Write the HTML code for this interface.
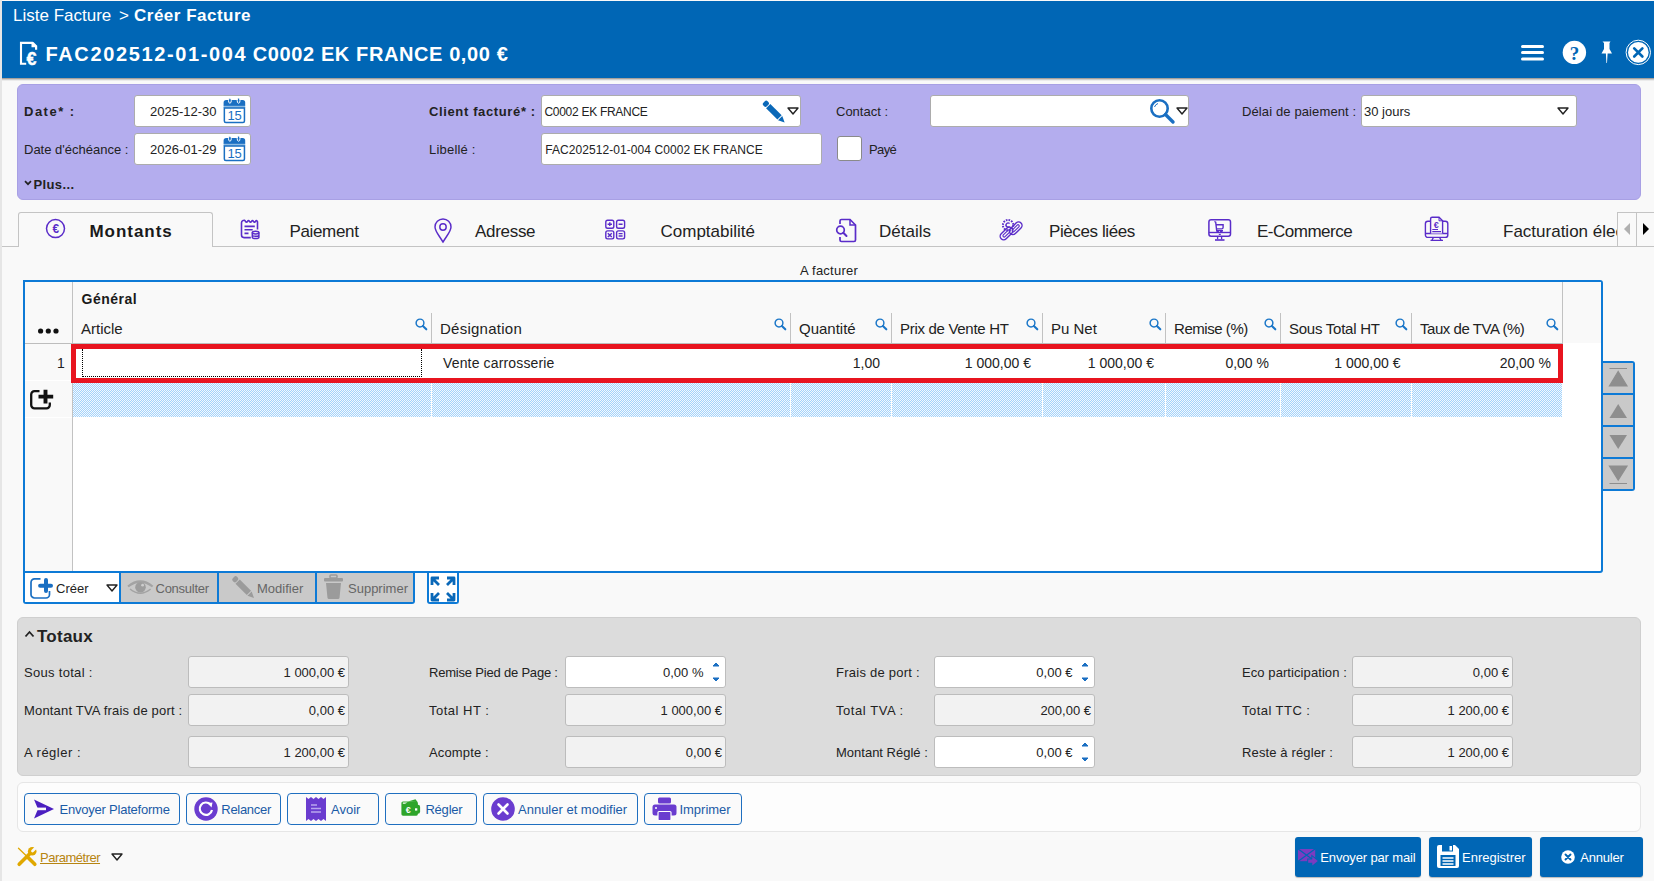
<!DOCTYPE html>
<html><head><meta charset="utf-8">
<style>
*{box-sizing:border-box;margin:0;padding:0}
html,body{width:1654px;height:881px;overflow:hidden;background:#f9f9f9;font-family:"Liberation Sans",sans-serif;color:#222;position:relative}
.a{position:absolute}
.t{position:absolute;white-space:nowrap;line-height:1}
.s13{font-size:13px}
.b{font-weight:bold}
.inp{position:absolute;background:#fff;border:1px solid #acacac;border-radius:3px}
.ro{position:absolute;background:#f2f2f2;border:1px solid #bcbcbc;border-radius:3px}
svg{position:absolute;overflow:visible}
</style></head><body>
<!-- left strip -->
<div class="a" style="left:0;top:0;width:2px;height:881px;background:#e6e6e6"></div>
<!-- header -->
<div class="a" style="left:2px;top:78px;width:1652px;height:1px;background:#a6a19c"></div><div class="a" style="left:2px;top:79px;width:1652px;height:1px;background:#cdcdcd"></div><div class="a" style="left:2px;top:80px;width:1652px;height:1px;background:#ebebeb"></div><div class="a" style="left:2px;top:1px;width:1652px;height:77px;background:#0066b5"></div>
<div class="t" style="left:13px;top:6.5px;font-size:17px;color:#fff">Liste Facture</div>
<div class="t" style="left:119px;top:6.5px;font-size:17px;color:#fff">&gt;</div>
<div class="t b" style="left:134px;top:6.5px;font-size:17px;color:#fff;letter-spacing:.5px">Créer Facture</div>
<div class="t b" style="left:45.5px;top:43.9px;font-size:20px;color:#fff;letter-spacing:1.63px">FAC202512-01-004<span style="letter-spacing:0"> </span><span style="letter-spacing:.6px">C0002 EK FRANCE 0,00 €</span></div>


<!-- title icon -->
<svg style="left:19px;top:41px" width="20" height="25" viewBox="0 0 20 25"><path d="M7.2 22.8 H2 V1.9 H13.9" fill="none" stroke="#fff" stroke-width="2.1"/><path d="M12.5 0.9 H14.4 L18.2 4.7 V8.7 H16 V6.3 H12.5 Z" fill="#fff"/><text x="7.6" y="24" font-family="Liberation Sans" font-weight="bold" font-size="18" fill="#fff" stroke="#fff" stroke-width=".35">€</text></svg>
<!-- hamburger -->
<svg style="left:1521px;top:44px" width="23" height="17"><rect x="0" y="1" width="23" height="3" rx="1.5" fill="#fff"/><rect x="0" y="7" width="23" height="3" rx="1.5" fill="#fff"/><rect x="0" y="13.5" width="23" height="3" rx="1.5" fill="#fff"/></svg>
<!-- help -->
<svg style="left:1562px;top:40px" width="25" height="25"><circle cx="12.4" cy="12.4" r="11.7" fill="#fff"/><text x="12.4" y="19.5" text-anchor="middle" font-family="Liberation Serif" font-weight="bold" font-size="19" fill="#0066b5">?</text></svg>
<!-- pin -->
<svg style="left:1600px;top:40px" width="14" height="25"><path d="M2.5 1.5 H10.5 L9.5 3 L9.5 9 L12 13.5 H7.6 L7 23 L6.4 23 L5.9 13.5 H1.5 L4 9 L4 3 Z" fill="#fff"/></svg>
<!-- close -->
<svg style="left:1625px;top:39px" width="27" height="27"><circle cx="13.3" cy="13.4" r="12.2" fill="none" stroke="#fff" stroke-width="1"/><circle cx="13.3" cy="13.4" r="10.3" fill="#fff"/><path d="M9.2 9.3 L17.4 17.5 M17.4 9.3 L9.2 17.5" stroke="#0066b5" stroke-width="2.6" stroke-linecap="round"/></svg>

<!-- purple panel -->
<div class="a" style="left:17px;top:84px;width:1624px;height:116px;background:#b4adee;border:1px solid #a8a0e4;border-radius:6px"></div>
<div class="t b s13" style="left:24px;top:105px;letter-spacing:1.5px">Date* :</div>
<div class="t s13" style="left:24px;top:143px">Date d'échéance :</div>
<svg style="left:24px;top:180px" width="8" height="6"><path d="M1 1.2 L4 4.2 L7 1.2" fill="none" stroke="#222" stroke-width="1.7"/></svg><div class="t b s13" style="left:33.4px;top:177.8px;letter-spacing:.4px">Plus...</div>
<div class="inp" style="left:134px;top:95px;width:117px;height:32px"></div>
<div class="t s13" style="left:150px;top:105px">2025-12-30</div>
<div class="inp" style="left:134px;top:133px;width:117px;height:32px"></div>
<div class="t s13" style="left:150px;top:143px">2026-01-29</div>
<svg style="left:223px;top:97px" width="24" height="27" viewBox="0 0 24 27"><path d="M0.6 5.5 A2.5 2.5 0 0 1 3.1 3 H19.7 A2.5 2.5 0 0 1 22.2 5.5 V9 H0.6 Z" fill="#1a6fc2"/><rect x="0.6" y="8.8" width="21.6" height="2.3" fill="#8cbbe3"/><path d="M1.35 11.1 H21.45 V24 A1.5 1.5 0 0 1 19.95 25.5 H2.85 A1.5 1.5 0 0 1 1.35 24 Z" fill="none" stroke="#1a6fc2" stroke-width="1.5"/><ellipse cx="6.9" cy="3.6" rx="1.4" ry="2.6" fill="#1a6fc2" stroke="#fff" stroke-width="1"/><ellipse cx="15.6" cy="3.6" rx="1.4" ry="2.6" fill="#1a6fc2" stroke="#fff" stroke-width="1"/><text x="11.5" y="22.8" text-anchor="middle" font-family="Liberation Sans" font-size="13" fill="#1a6fc2" letter-spacing="-.3">15</text></svg>
<svg style="left:223px;top:135px" width="24" height="27" viewBox="0 0 24 27"><path d="M0.6 5.5 A2.5 2.5 0 0 1 3.1 3 H19.7 A2.5 2.5 0 0 1 22.2 5.5 V9 H0.6 Z" fill="#1a6fc2"/><rect x="0.6" y="8.8" width="21.6" height="2.3" fill="#8cbbe3"/><path d="M1.35 11.1 H21.45 V24 A1.5 1.5 0 0 1 19.95 25.5 H2.85 A1.5 1.5 0 0 1 1.35 24 Z" fill="none" stroke="#1a6fc2" stroke-width="1.5"/><ellipse cx="6.9" cy="3.6" rx="1.4" ry="2.6" fill="#1a6fc2" stroke="#fff" stroke-width="1"/><ellipse cx="15.6" cy="3.6" rx="1.4" ry="2.6" fill="#1a6fc2" stroke="#fff" stroke-width="1"/><text x="11.5" y="22.8" text-anchor="middle" font-family="Liberation Sans" font-size="13" fill="#1a6fc2" letter-spacing="-.3">15</text></svg>

<div class="t b s13" style="left:429px;top:105px;letter-spacing:.63px">Client facturé* :</div>
<div class="t s13" style="left:429px;top:143px;letter-spacing:.2px">Libellé :</div>
<div class="inp" style="left:541px;top:95px;width:260px;height:32px"></div>
<div class="t" style="left:544.4px;top:105.6px;font-size:12px;letter-spacing:-.28px">C0002 EK FRANCE</div>
<svg style="left:760px;top:98px" width="28" height="28" viewBox="0 0 28 28"><g transform="translate(4.1 4) rotate(45)"><rect x="0" y="-3" width="5" height="6" rx="2" fill="#0a68b8"/><rect x="5.8" y="-3" width="16" height="6" fill="#0a68b8"/><path d="M22.7 -3 L29 0 L22.7 3 Z" fill="#0a68b8"/></g></svg>
<svg style="left:787px;top:107px" width="12" height="8"><path d="M1 1 H11 L6 7 Z" fill="#fff" stroke="#222" stroke-width="1.4" stroke-linejoin="round"/></svg>
<div class="inp" style="left:541px;top:133px;width:281px;height:32px"></div>
<div class="t" style="left:545.2px;top:143.6px;font-size:12px;letter-spacing:.07px">FAC202512-01-004 C0002 EK FRANCE</div>

<div class="t s13" style="left:836px;top:105px">Contact :</div>
<div class="inp" style="left:930px;top:95px;width:259px;height:32px"></div>
<svg style="left:1149px;top:98px" width="28" height="27" viewBox="0 0 28 27"><circle cx="10.5" cy="10.5" r="8.2" fill="none" stroke="#1a6fc2" stroke-width="2.6"/><path d="M16.5 16.5 L24 24" stroke="#1a6fc2" stroke-width="3.4" stroke-linecap="round"/><path d="M5.5 9 A5.5 5.5 0 0 1 9 5.5" stroke="#1a6fc2" stroke-width="1" fill="none"/></svg>
<svg style="left:1176px;top:107px" width="12" height="8"><path d="M1 1 H11 L6 7 Z" fill="#fff" stroke="#222" stroke-width="1.4" stroke-linejoin="round"/></svg>
<div class="a" style="left:837px;top:136px;width:25px;height:25px;background:#fff;border:1px solid #8a8a8a;border-radius:3px"></div>
<div class="t s13" style="left:869px;top:143px;letter-spacing:-.6px">Payé</div>

<div class="t s13" style="left:1242px;top:105px;letter-spacing:.12px">Délai de paiement :</div>
<div class="inp" style="left:1361px;top:95px;width:216px;height:32px"></div>
<div class="t s13" style="left:1364px;top:105px">30 jours</div>
<svg style="left:1557px;top:107px" width="12" height="8"><path d="M1 1 H11 L6 7 Z" fill="#fff" stroke="#222" stroke-width="1.4" stroke-linejoin="round"/></svg>


<!-- tabs -->
<div class="a" style="left:2px;top:246px;width:1652px;height:1px;background:#c4c4c4"></div>
<div class="a" style="left:18px;top:212px;width:195px;height:35px;background:#f9f9f9;border:1px solid #c4c4c4;border-bottom:none;border-radius:3px 3px 0 0"></div>
<svg style="left:45px;top:218px" width="21" height="21" viewBox="0 0 21 21"><circle cx="10.5" cy="10.6" r="9" fill="none" stroke="#5a2cc9" stroke-width="1.5"/><text x="10.8" y="15" text-anchor="middle" font-family="Liberation Sans" font-weight="bold" font-size="12" fill="#5a2cc9">€</text></svg>
<div class="t b" style="left:89.5px;top:222.5px;font-size:17px;color:#1a1a1a;letter-spacing:.95px">Montants</div>
<svg style="left:239px;top:218px" width="23" height="23" viewBox="0 0 23 23" fill="none" stroke="#5a2cc9"><path d="M11.8 19.6 H5 A2.5 2.5 0 0 1 2.5 17.1 V5 A2.5 2.5 0 0 1 4 2.6 Q5.5 1.5 6.5 3.5 Q7.5 5 8.5 3.5 Q9.5 1.5 10.5 3.5 Q11.5 5 12.5 3.5 Q13.5 1.5 14.5 3.5 Q15.5 5 16.5 3.5 Q17.5 1.5 18.5 3.8 V11.6" stroke-width="1.6"/><path d="M5.5 8.4 H15.8 M5.5 11.7 H13.7 M5.5 15.4 H9.5" stroke-width="1.6"/><ellipse cx="16.6" cy="14.6" rx="3.3" ry="1.4" stroke-width="1.5"/><path d="M13.3 14.6 V19.2 A3.3 1.4 0 0 0 19.9 19.2 V14.6 M13.3 16.9 A3.3 1.4 0 0 0 19.9 16.9" stroke-width="1.5"/></svg>
<div class="t" style="left:289.5px;top:222.5px;font-size:17px;color:#222;letter-spacing:-.35px">Paiement</div>
<svg style="left:432.7px;top:218.5px" width="20" height="24" viewBox="0 0 20 24"><path d="M10 23 C5 15 2 12 2 8 A8 8 0 0 1 18 8 C18 12 15 15 10 23 Z" fill="none" stroke="#5a2cc9" stroke-width="1.45"/><circle cx="10" cy="8" r="3.2" fill="none" stroke="#5a2cc9" stroke-width="1.45"/></svg>
<div class="t" style="left:475px;top:222.5px;font-size:17px;color:#222;letter-spacing:-.3px">Adresse</div>
<svg style="left:603px;top:218px" width="24" height="24" viewBox="0 0 24 24" fill="none" stroke="#5a2cc9"><rect x="2.8" y="2.2" width="8" height="8" rx="1.8" stroke-width="1.4"/><rect x="13.6" y="2.2" width="8" height="8" rx="1.8" stroke-width="1.4"/><rect x="2.8" y="12.9" width="8" height="8" rx="1.8" stroke-width="1.4"/><rect x="13.6" y="12.9" width="8" height="8" rx="1.8" stroke-width="1.4"/><path d="M6.8 4.3 V8.1 M4.6 6.2 H9 M15.6 6.2 H19.6 M4.8 15.2 L8.8 19 M8.8 15.2 L4.8 19 M15.6 15.6 H19.6 M15.6 18 H19.6" stroke-width="1.4"/></svg>
<div class="t" style="left:660.5px;top:222.5px;font-size:17px;color:#222">Comptabilité</div>
<svg style="left:834px;top:218px" width="24" height="25" viewBox="0 0 24 25"><path d="M6 6 V3 A1.5 1.5 0 0 1 7.5 1.5 H16 L21.5 7 V22 A1.5 1.5 0 0 1 20 23.5 H7.5 A1.5 1.5 0 0 1 6 22 V19" fill="none" stroke="#5a2cc9" stroke-width="1.7"/><path d="M16 1.5 V7 H21.5" fill="none" stroke="#5a2cc9" stroke-width="1.5"/><circle cx="6.5" cy="12" r="3.8" fill="none" stroke="#5a2cc9" stroke-width="1.7"/><path d="M9.3 14.8 L12.5 18" stroke="#5a2cc9" stroke-width="2" stroke-linecap="round"/></svg>
<div class="t" style="left:879px;top:222.5px;font-size:17px;color:#222">Détails</div>
<svg style="left:1000px;top:218px" width="23" height="23" viewBox="0 0 23 23" fill="none" stroke="#5a2cc9"><circle cx="8.1" cy="7.1" r="5.2" stroke-width="2" stroke-dasharray="1.6 1.1"/><circle cx="8.1" cy="7.1" r="3.6" fill="#f9f9f9" stroke="none"/><path d="M9.6 5.6 A2.1 2.1 0 1 0 9.6 8.6" stroke-width="1.4"/><g transform="translate(6.5 15.5) rotate(-45)"><rect x="-7.5" y="-3.5" width="15" height="7" rx="3.5" stroke-width="1.4"/><rect x="-4.5" y="-1.2" width="9" height="2.4" rx="1.2" stroke-width="1.1"/></g><g transform="translate(15.7 10.3) rotate(-45)"><rect x="-7.5" y="-3.5" width="15" height="7" rx="3.5" stroke-width="1.4"/><rect x="-4.5" y="-1.2" width="9" height="2.4" rx="1.2" stroke-width="1.1"/></g></svg>
<div class="t" style="left:1049px;top:222.5px;font-size:17px;color:#222;letter-spacing:-.4px">Pièces liées</div>
<svg style="left:1207px;top:218px" width="25" height="24" viewBox="0 0 25 24" fill="none" stroke="#5a2cc9"><rect x="1.9" y="1.7" width="21.6" height="16.6" rx="2.2" stroke-width="1.5"/><path d="M1.9 14.5 H23.5" stroke-width="1.4"/><path d="M11.8 16.4 H13.8" stroke-width="1.2"/><path d="M10.6 18.3 V21.3 M14.6 18.3 V21.3" stroke-width="1.3"/><path d="M8 22 H17.5" stroke-width="1.6"/><path d="M7.4 3.5 L8.7 4.2 L9.6 12 M9.4 6.7 H16.1 V9.5 Q16 10.9 14.8 10.9 H9.9" stroke-width="1.4"/><path d="M9 12.6 H16" stroke-width="1.2"/><circle cx="10.7" cy="13.4" r="1.3" fill="#5a2cc9" stroke="none"/><circle cx="14.3" cy="13.4" r="1.3" fill="#5a2cc9" stroke="none"/></svg>
<div class="t" style="left:1257px;top:222.5px;font-size:17px;color:#222;letter-spacing:-.5px">E-Commerce</div>
<svg style="left:1424px;top:216px" width="26" height="27" viewBox="0 0 26 27" fill="none" stroke="#5a2cc9"><rect x="1.4" y="5.2" width="22.4" height="16.2" rx="2.5" stroke-width="1.4"/><path d="M1.4 17.5 H23.8" stroke-width="1.5"/><path d="M6.6 17.5 V2.7 A1.5 1.5 0 0 1 8.1 1.2 H15 L18.6 4.8 V17.5" fill="#f9f9f9" stroke-width="1.4"/><path d="M15 1.2 V4.8 H18.6" stroke-width="1"/><text x="12.2" y="12.4" text-anchor="middle" font-family="Liberation Sans" font-weight="bold" font-size="9" fill="#5a2cc9" stroke="none">€</text><path d="M8.3 13.5 H14 M8.3 15.6 H17" stroke-width="1.1"/><path d="M9.5 21.4 L8 24 M15.5 21.4 L17 24 M6.5 24.4 H19" stroke-width="1.3"/></svg>
<div class="a" style="left:1503px;top:218px;width:114px;height:28px;overflow:hidden"><div class="t" style="left:0;top:4.5px;font-size:17px;color:#222">Facturation électronique</div></div>
<div class="a" style="left:1617px;top:212px;width:20px;height:35px;background:#f9f9f9;border:1px solid #c4c4c4"></div>
<div class="a" style="left:1636px;top:212px;width:18px;height:35px;background:#f9f9f9;border:1px solid #c4c4c4;border-right:none"></div>
<svg style="left:1622px;top:222px" width="10" height="14"><path d="M8 1 L2 7 L8 13 Z" fill="#b0b0b0"/></svg>
<svg style="left:1641px;top:222px" width="10" height="14"><path d="M2 1 L8 7 L2 13 Z" fill="#000"/></svg>

<div class="t s13" style="left:800px;top:264.2px;letter-spacing:.24px">A facturer</div>


<!-- grid -->
<div class="a" style="left:23px;top:280px;width:1580px;height:293px;background:#fff;border:2px solid #0d7ad6;border-radius:0 3px 3px 0"></div>
<div class="a" style="left:25px;top:282px;width:1576px;height:61px;background:#f9f9f9"></div><div class="a" style="left:1562px;top:282px;width:1px;height:61px;background:#c2c2c2"></div>
<div class="a" style="left:25px;top:344px;width:47px;height:227px;background:#f9f9f9"></div><div class="a" style="left:25px;top:380px;width:47px;height:1px;background:#fff"></div><div class="a" style="left:25px;top:417px;width:47px;height:1px;background:#fff"></div>
<div class="a" style="left:72px;top:282px;width:1px;height:289px;background:#c2c2c2"></div>
<div class="a" style="left:25px;top:343px;width:1538px;height:1px;background:#bdbdbd"></div>
<div class="t b" style="left:81.5px;top:291.9px;font-size:14px;color:#1a1a1a;letter-spacing:.5px">Général</div>
<svg style="left:38px;top:328px" width="21" height="6"><circle cx="2.6" cy="3" r="2.6" fill="#111"/><circle cx="10.3" cy="3" r="2.6" fill="#111"/><circle cx="18" cy="3" r="2.6" fill="#111"/></svg>
<div class="t" style="left:81px;top:320.8px;font-size:15px;color:#222;letter-spacing:0px">Article</div>
<svg style="left:415px;top:318px" width="13" height="13" viewBox="0 0 13 13"><circle cx="5" cy="5" r="3.9" fill="none" stroke="#1a76c8" stroke-width="1.45"/><path d="M7.9 7.9 L11.3 11.3" stroke="#1a76c8" stroke-width="2.1" stroke-linecap="round"/></svg>
<div class="t" style="left:440px;top:320.8px;font-size:15px;color:#222;letter-spacing:.25px">Désignation</div>
<svg style="left:774px;top:318px" width="13" height="13" viewBox="0 0 13 13"><circle cx="5" cy="5" r="3.9" fill="none" stroke="#1a76c8" stroke-width="1.45"/><path d="M7.9 7.9 L11.3 11.3" stroke="#1a76c8" stroke-width="2.1" stroke-linecap="round"/></svg>
<div class="a" style="left:431px;top:313px;width:1px;height:30px;background:#c2c2c2"></div>
<div class="t" style="left:799px;top:320.8px;font-size:15px;color:#222;letter-spacing:0px">Quantité</div>
<svg style="left:875px;top:318px" width="13" height="13" viewBox="0 0 13 13"><circle cx="5" cy="5" r="3.9" fill="none" stroke="#1a76c8" stroke-width="1.45"/><path d="M7.9 7.9 L11.3 11.3" stroke="#1a76c8" stroke-width="2.1" stroke-linecap="round"/></svg>
<div class="a" style="left:790px;top:313px;width:1px;height:30px;background:#c2c2c2"></div>
<div class="t" style="left:900px;top:320.8px;font-size:15px;color:#222;letter-spacing:-0.3px">Prix de Vente HT</div>
<svg style="left:1026px;top:318px" width="13" height="13" viewBox="0 0 13 13"><circle cx="5" cy="5" r="3.9" fill="none" stroke="#1a76c8" stroke-width="1.45"/><path d="M7.9 7.9 L11.3 11.3" stroke="#1a76c8" stroke-width="2.1" stroke-linecap="round"/></svg>
<div class="a" style="left:891px;top:313px;width:1px;height:30px;background:#c2c2c2"></div>
<div class="t" style="left:1051px;top:320.8px;font-size:15px;color:#222;letter-spacing:0px">Pu Net</div>
<svg style="left:1149px;top:318px" width="13" height="13" viewBox="0 0 13 13"><circle cx="5" cy="5" r="3.9" fill="none" stroke="#1a76c8" stroke-width="1.45"/><path d="M7.9 7.9 L11.3 11.3" stroke="#1a76c8" stroke-width="2.1" stroke-linecap="round"/></svg>
<div class="a" style="left:1042px;top:313px;width:1px;height:30px;background:#c2c2c2"></div>
<div class="t" style="left:1174px;top:320.8px;font-size:15px;color:#222;letter-spacing:-0.45px">Remise (%)</div>
<svg style="left:1264px;top:318px" width="13" height="13" viewBox="0 0 13 13"><circle cx="5" cy="5" r="3.9" fill="none" stroke="#1a76c8" stroke-width="1.45"/><path d="M7.9 7.9 L11.3 11.3" stroke="#1a76c8" stroke-width="2.1" stroke-linecap="round"/></svg>
<div class="a" style="left:1165px;top:313px;width:1px;height:30px;background:#c2c2c2"></div>
<div class="t" style="left:1289px;top:320.8px;font-size:15px;color:#222;letter-spacing:-0.25px">Sous Total HT</div>
<svg style="left:1395px;top:318px" width="13" height="13" viewBox="0 0 13 13"><circle cx="5" cy="5" r="3.9" fill="none" stroke="#1a76c8" stroke-width="1.45"/><path d="M7.9 7.9 L11.3 11.3" stroke="#1a76c8" stroke-width="2.1" stroke-linecap="round"/></svg>
<div class="a" style="left:1280px;top:313px;width:1px;height:30px;background:#c2c2c2"></div>
<div class="t" style="left:1420px;top:320.8px;font-size:15px;color:#222;letter-spacing:-0.45px">Taux de TVA (%)</div>
<svg style="left:1546px;top:318px" width="13" height="13" viewBox="0 0 13 13"><circle cx="5" cy="5" r="3.9" fill="none" stroke="#1a76c8" stroke-width="1.45"/><path d="M7.9 7.9 L11.3 11.3" stroke="#1a76c8" stroke-width="2.1" stroke-linecap="round"/></svg>
<div class="a" style="left:1411px;top:313px;width:1px;height:30px;background:#c2c2c2"></div>
<div class="a" style="left:73px;top:383px;width:1489px;height:34px;background:conic-gradient(#a3d3fb 25%,#f4f9fe 0 50%,#a3d3fb 0 75%,#f4f9fe 0) 0 0/2px 2px"></div>
<div class="a" style="left:431px;top:383px;width:1px;height:34px;background:#fff"></div>
<div class="a" style="left:790px;top:383px;width:1px;height:34px;background:#fff"></div>
<div class="a" style="left:891px;top:383px;width:1px;height:34px;background:#fff"></div>
<div class="a" style="left:1042px;top:383px;width:1px;height:34px;background:#fff"></div>
<div class="a" style="left:1165px;top:383px;width:1px;height:34px;background:#fff"></div>
<div class="a" style="left:1280px;top:383px;width:1px;height:34px;background:#fff"></div>
<div class="a" style="left:1411px;top:383px;width:1px;height:34px;background:#fff"></div>
<div class="a" style="left:71px;top:344px;width:1492px;height:39px;background:#fff;border:5px solid #e8141f"></div>
<div class="a" style="left:82px;top:350px;width:340px;height:27px;border:1px dotted #000;border-top:none"></div>
<div class="a" style="left:82px;top:349px;width:1px;height:28px;border-left:1px dotted #000"></div>
<div class="a" style="left:421px;top:349px;width:1px;height:28px;border-left:1px dotted #000"></div>
<div class="t" style="left:57px;top:355.6px;font-size:14px;color:#222">1</div>
<div class="t" style="left:443px;top:355.6px;font-size:14px;color:#222;letter-spacing:.15px">Vente carrosserie</div>
<div class="t" style="right:774px;top:355.6px;font-size:14px;color:#222">1,00</div>
<div class="t" style="right:623px;top:355.6px;font-size:14px;color:#222">1 000,00 €</div>
<div class="t" style="right:500px;top:355.6px;font-size:14px;color:#222">1 000,00 €</div>
<div class="t" style="right:385px;top:355.6px;font-size:14px;color:#222">0,00 %</div>
<div class="t" style="right:253.5px;top:355.6px;font-size:14px;color:#222">1 000,00 €</div>
<div class="t" style="right:103px;top:355.6px;font-size:14px;color:#222">20,00 %</div>
<svg style="left:30px;top:389px" width="25" height="21" viewBox="0 0 25 21"><path d="M9.5 2.2 H4.5 A3.3 3.3 0 0 0 1.2 5.5 V16 A3.3 3.3 0 0 0 4.5 19.3 H16.5 A3.3 3.3 0 0 0 19.8 16 V13.5" fill="none" stroke="#111" stroke-width="2.3"/><path d="M15.5 0.8 V14.6 M8.5 7.6 H23.2" stroke="#111" stroke-width="3.9" stroke-linecap="butt"/></svg>
<div class="a" style="left:1601px;top:361px;width:34px;height:130px;background:#0d7ad6;border-radius:0 3px 3px 0"></div>
<div class="a" style="left:1603px;top:363px;width:30px;height:30px;background:#c9c9c9"></div>
<div class="a" style="left:1603px;top:395px;width:30px;height:30px;background:#c9c9c9"></div>
<div class="a" style="left:1603px;top:427px;width:30px;height:30px;background:#c9c9c9"></div>
<div class="a" style="left:1603px;top:459px;width:30px;height:30px;background:#c9c9c9"></div>
<svg style="left:1603px;top:363px" width="30" height="126"><path d="M6.5 5.5 H24 M15.2 8.5 L24 23 H6.5 Z" fill="#8e8e8e" stroke="#8e8e8e" stroke-width="1.2"/><path d="M15.2 41 L24 55 H6.5 Z" fill="#8e8e8e"/><path d="M6.5 72 H24 L15.2 86 Z" fill="#8e8e8e"/><path d="M6.5 103 H24 L15.2 117 Z M6.5 120.5 H24" fill="#8e8e8e" stroke="#8e8e8e" stroke-width="1.2"/></svg>

<!-- bottom -->
<div class="a" style="left:23px;top:571px;width:392px;height:33px;background:#0d7ad6;border-radius:0 0 3px 3px"></div>
<div class="a" style="left:25px;top:573px;width:94px;height:29px;background:#fff"></div>
<div class="a" style="left:121px;top:573px;width:96px;height:29px;background:#c9c9c9"></div>
<div class="a" style="left:219px;top:573px;width:96px;height:29px;background:#c9c9c9"></div>
<div class="a" style="left:317px;top:573px;width:96px;height:29px;background:#c9c9c9"></div>
<svg style="left:30px;top:577px" width="25" height="23" viewBox="0 0 25 23"><path d="M10.5 1.9 H4.5 A3.5 3.5 0 0 0 1 5.4 V17.5 A3.5 3.5 0 0 0 4.5 21 H16 A3.5 3.5 0 0 0 19.5 17.5 V14" fill="none" stroke="#1a6fc2" stroke-width="1.7"/><path d="M16 3.1 V14 M10.1 8.7 H21" stroke="#1a6fc2" stroke-width="4" stroke-linecap="round"/></svg>
<div class="t s13" style="left:56px;top:582.1px;color:#222">Créer</div>
<svg style="left:106px;top:584px" width="12" height="8"><path d="M1 1 H11 L6 7 Z" fill="#fff" stroke="#222" stroke-width="1.4" stroke-linejoin="round"/></svg>
<svg style="left:127px;top:578px" width="27" height="19" viewBox="0 0 27 19" fill="none"><path d="M1 8.5 Q13.3 -1.5 25.6 8.5" stroke="#a3a3a3" stroke-width="2.2"/><path d="M3 11 Q13.3 19.5 23.6 11" stroke="#a3a3a3" stroke-width="1.4"/><circle cx="13.5" cy="9.3" r="5.3" fill="#9d9d9d"/><circle cx="15.6" cy="7.2" r="1.4" fill="#cdcdcd"/></svg>
<div class="t s13" style="left:155.5px;top:582.1px;color:#666;letter-spacing:-.25px">Consulter</div>
<svg style="left:229px;top:573px" width="28" height="28" viewBox="0 0 28 28"><g transform="translate(4.5 4.5) rotate(45)"><rect x="0" y="-3" width="5" height="6" rx="2" fill="#9b9b9b"/><rect x="5.8" y="-3" width="16" height="6" fill="#9b9b9b"/><path d="M22.7 -3 L29 0 L22.7 3 Z" fill="#9b9b9b"/></g></svg>
<div class="t s13" style="left:257px;top:582.1px;color:#666">Modifier</div>
<svg style="left:323px;top:574px" width="21" height="26" viewBox="0 0 21 26"><rect x="7" y="1" width="7" height="3" rx="1" fill="none" stroke="#9b9b9b" stroke-width="1.6"/><rect x="1" y="4" width="19" height="3.5" rx="1" fill="#9b9b9b"/><path d="M3 9 H18 L16.5 24 A1.5 1.5 0 0 1 15 25 H6 A1.5 1.5 0 0 1 4.5 24 Z" fill="#9b9b9b"/></svg>
<div class="t s13" style="left:348px;top:582.1px;color:#666">Supprimer</div>
<div class="a" style="left:427px;top:573px;width:32px;height:31px;background:#fff;border:2px solid #0d7ad6;border-top:none;border-radius:0 0 3px 3px"></div>
<svg style="left:429px;top:575px" width="28" height="28" viewBox="0 0 28 28" fill="none" stroke="#0a68b8" stroke-width="2.8" stroke-linejoin="round"><path d="M3 10 V3 H10 M3 3 L10 10"/><path d="M18 3 H25 V10 M25 3 L18 10"/><path d="M3 18 V25 H10 M3 25 L10 18"/><path d="M25 18 V25 H18 M25 25 L18 18"/></svg>
<div class="a" style="left:17px;top:617px;width:1624px;height:159px;background:#dcdcdc;border:1px solid #cfcfcf;border-radius:6px"></div>
<svg style="left:24px;top:630px" width="11" height="8"><path d="M1.5 6.5 L5.5 2 L9.5 6.5" fill="none" stroke="#222" stroke-width="1.8"/></svg>
<div class="t b" style="left:37px;top:628px;font-size:17px;color:#222;letter-spacing:.25px">Totaux</div>
<div class="t s13" style="left:24px;top:665.8px;color:#222;letter-spacing:.3px">Sous total :</div>
<div class="ro" style="left:188px;top:656px;width:161px;height:32px"></div>
<div class="t s13" style="right:1309px;top:665.8px;color:#222">1 000,00 €</div>
<div class="t s13" style="left:24px;top:703.9px;color:#222;letter-spacing:.18px">Montant TVA frais de port :</div>
<div class="ro" style="left:188px;top:694px;width:161px;height:32px"></div>
<div class="t s13" style="right:1309px;top:703.9px;color:#222">0,00 €</div>
<div class="t s13" style="left:24px;top:745.9px;color:#222;letter-spacing:0.5px">A régler :</div>
<div class="ro" style="left:188px;top:736px;width:161px;height:32px"></div>
<div class="t s13" style="right:1309px;top:745.9px;color:#222">1 200,00 €</div>
<div class="t s13" style="left:429px;top:665.8px;color:#222;letter-spacing:-.2px">Remise Pied de Page :</div>
<div class="inp" style="left:565px;top:656px;width:161px;height:32px;border-color:#bdbdbd"></div>
<div class="t s13" style="right:950.5px;top:665.8px;color:#222">0,00 %</div>
<svg style="left:711px;top:660.5px" width="10" height="22"><path d="M2 5 L5 2 L8 5 Z M2 17 L5 20 L8 17 Z" fill="#1a6fc2" stroke="#1a6fc2" stroke-width="1" stroke-linejoin="round"/></svg>
<div class="t s13" style="left:429px;top:703.9px;color:#222;letter-spacing:0.5px">Total HT :</div>
<div class="ro" style="left:565px;top:694px;width:161px;height:32px"></div>
<div class="t s13" style="right:932px;top:703.9px;color:#222">1 000,00 €</div>
<div class="t s13" style="left:429px;top:745.9px;color:#222;letter-spacing:0.15px">Acompte :</div>
<div class="ro" style="left:565px;top:736px;width:161px;height:32px"></div>
<div class="t s13" style="right:932px;top:745.9px;color:#222">0,00 €</div>
<div class="t s13" style="left:836px;top:665.8px;color:#222;letter-spacing:0.25px">Frais de port :</div>
<div class="inp" style="left:934px;top:656px;width:161px;height:32px;border-color:#bdbdbd"></div>
<div class="t s13" style="right:581.5px;top:665.8px;color:#222">0,00 €</div>
<svg style="left:1080px;top:660.5px" width="10" height="22"><path d="M2 5 L5 2 L8 5 Z M2 17 L5 20 L8 17 Z" fill="#1a6fc2" stroke="#1a6fc2" stroke-width="1" stroke-linejoin="round"/></svg>
<div class="t s13" style="left:836px;top:703.9px;color:#222;letter-spacing:0.55px">Total TVA :</div>
<div class="ro" style="left:934px;top:694px;width:161px;height:32px"></div>
<div class="t s13" style="right:563px;top:703.9px;color:#222">200,00 €</div>
<div class="t s13" style="left:836px;top:745.9px;color:#222">Montant Réglé :</div>
<div class="inp" style="left:934px;top:736px;width:161px;height:32px;border-color:#bdbdbd"></div>
<div class="t s13" style="right:581.5px;top:745.9px;color:#222">0,00 €</div>
<svg style="left:1080px;top:740.5px" width="10" height="22"><path d="M2 5 L5 2 L8 5 Z M2 17 L5 20 L8 17 Z" fill="#1a6fc2" stroke="#1a6fc2" stroke-width="1" stroke-linejoin="round"/></svg>
<div class="t s13" style="left:1242px;top:665.8px;color:#222;letter-spacing:0.08px">Eco participation :</div>
<div class="ro" style="left:1352px;top:656px;width:161px;height:32px"></div>
<div class="t s13" style="right:145px;top:665.8px;color:#222">0,00 €</div>
<div class="t s13" style="left:1242px;top:703.9px;color:#222;letter-spacing:0.46px">Total TTC :</div>
<div class="ro" style="left:1352px;top:694px;width:161px;height:32px"></div>
<div class="t s13" style="right:145px;top:703.9px;color:#222">1 200,00 €</div>
<div class="t s13" style="left:1242px;top:745.9px;color:#222;letter-spacing:0.13px">Reste à régler :</div>
<div class="ro" style="left:1352px;top:736px;width:161px;height:32px"></div>
<div class="t s13" style="right:145px;top:745.9px;color:#222">1 200,00 €</div>
<div class="a" style="left:17px;top:782px;width:1624px;height:50px;background:#fdfdfd;border:1px solid #e6e6e6;border-radius:6px"></div>
<div class="a" style="left:24px;top:793px;width:156px;height:32px;background:#fafafa;border:1.5px solid #1f6fc0;border-radius:4px"></div>
<div class="t s13" style="left:59.5px;top:803px;color:#1a5aa6;letter-spacing:-.22px">Envoyer Plateforme</div>
<div class="a" style="left:186px;top:793px;width:95px;height:32px;background:#fafafa;border:1.5px solid #1f6fc0;border-radius:4px"></div>
<div class="t s13" style="left:221.3px;top:803px;color:#1a5aa6;letter-spacing:-0.3px">Relancer</div>
<div class="a" style="left:287px;top:793px;width:92px;height:32px;background:#fafafa;border:1.5px solid #1f6fc0;border-radius:4px"></div>
<div class="t s13" style="left:331px;top:803px;color:#1a5aa6;letter-spacing:0px">Avoir</div>
<div class="a" style="left:385px;top:793px;width:92px;height:32px;background:#fafafa;border:1.5px solid #1f6fc0;border-radius:4px"></div>
<div class="t s13" style="left:425.4px;top:803px;color:#1a5aa6;letter-spacing:-0.2px">Régler</div>
<div class="a" style="left:483px;top:793px;width:155px;height:32px;background:#fafafa;border:1.5px solid #1f6fc0;border-radius:4px"></div>
<div class="t s13" style="left:518px;top:803px;color:#1a5aa6;letter-spacing:0px">Annuler et modifier</div>
<div class="a" style="left:644px;top:793px;width:98px;height:32px;background:#fafafa;border:1.5px solid #1f6fc0;border-radius:4px"></div>
<div class="t s13" style="left:679.4px;top:803px;color:#1a5aa6;letter-spacing:0px">Imprimer</div>
<svg style="left:33px;top:798px" width="22" height="22" viewBox="0 0 22 22"><path d="M1 1.5 L21 11 L1 20.5 L5 11 Z" fill="#4b1fc0"/><path d="M4 10.9 H13" stroke="#fafafa" stroke-width="2.6"/></svg>
<svg style="left:194px;top:797px" width="24" height="24" viewBox="0 0 24 24"><circle cx="12" cy="12" r="11.7" fill="#6a3ccf"/><path d="M16.5 7.5 A6.2 6.2 0 1 0 18 13" fill="none" stroke="#fff" stroke-width="2.2"/><path d="M13.5 6 L18.5 5.5 L17.5 10.5 Z" fill="#fff"/></svg>
<svg style="left:306px;top:797px" width="20" height="24" viewBox="0 0 20 24"><path d="M0 0 L2.5 2 L5 0 L7.5 2 L10 0 L12.5 2 L15 0 L17.5 2 L20 0 V24 L17.5 22 L15 24 L12.5 22 L10 24 L7.5 22 L5 24 L2.5 22 L0 24 Z" fill="#6a3ccf"/><path d="M5 8 H11 M5 11.5 H15 M5 15 H15" stroke="#b9a6ee" stroke-width="1.4"/></svg>
<svg style="left:400px;top:798px" width="22" height="19" viewBox="0 0 22 19"><path d="M8 3.6 L15.5 1.3 L17.5 4 Z" fill="#2ea52a"/><rect x="1.4" y="3.4" width="16.5" height="14.3" rx="1.6" fill="#2ea52a"/><rect x="13.5" y="6.8" width="6.6" height="9" rx="2.2" fill="#2ea52a"/><path d="M2.8 4.6 H7.5 L5 5.8 H2.8 Z" fill="#fff"/><text x="8.3" y="15.3" text-anchor="middle" font-family="Liberation Sans" font-weight="bold" font-size="9" fill="#fff">€</text><rect x="15" y="10.3" width="2.3" height="2.3" fill="#fff"/></svg>
<svg style="left:491px;top:797px" width="24" height="24" viewBox="0 0 24 24"><circle cx="12" cy="12" r="11.8" fill="#6a3ccf"/><path d="M7.5 7.5 L16.5 16.5 M16.5 7.5 L7.5 16.5" stroke="#fff" stroke-width="2.6" stroke-linecap="round"/></svg>
<svg style="left:652px;top:797px" width="25" height="24" viewBox="0 0 25 24"><rect x="6" y="0.5" width="13" height="6" rx="1.5" fill="#6a3ccf"/><rect x="0.5" y="7.5" width="24" height="11" rx="2.5" fill="#6a3ccf"/><rect x="6" y="14.5" width="13" height="9" rx="1" fill="#6a3ccf" stroke="#fff" stroke-width="1.2"/><circle cx="4" cy="11" r="1" fill="#fff"/></svg>
<svg style="left:17px;top:846px" width="22" height="22" viewBox="0 0 22 22"><path d="M1.5 2.2 L10.5 11" stroke="#e0a800" stroke-width="1.3" stroke-linecap="round"/><path d="M11.5 12 L17.8 18.3" stroke="#e0a800" stroke-width="3.6" stroke-linecap="round"/><path d="M2.2 18.3 L12.5 8" stroke="#e0a800" stroke-width="3.6" stroke-linecap="round"/><circle cx="15.2" cy="5.2" r="4.3" fill="#e0a800"/><path d="M15.5 4.9 L20 0.4" stroke="#f9f9f9" stroke-width="2.8" stroke-linecap="round"/></svg>
<div class="t s13" style="left:40px;top:850.8px;color:#b78511;text-decoration:underline;letter-spacing:-.5px">Paramétrer</div>
<svg style="left:111px;top:853px" width="12" height="8"><path d="M1 1 H11 L6 7 Z" fill="#fff" stroke="#222" stroke-width="1.4" stroke-linejoin="round"/></svg>
<div class="a" style="left:1295px;top:836.5px;width:126px;height:40.5px;background:#0066b5;border-radius:3px;box-shadow:0 1px 1px rgba(0,0,0,.25)"></div>
<div class="a" style="left:1429px;top:836.5px;width:103px;height:40.5px;background:#0066b5;border-radius:3px;box-shadow:0 1px 1px rgba(0,0,0,.25)"></div>
<div class="a" style="left:1540px;top:836.5px;width:103px;height:40.5px;background:#0066b5;border-radius:3px;box-shadow:0 1px 1px rgba(0,0,0,.25)"></div>
<div class="t s13" style="left:1320.3px;top:850.9px;color:#fff;letter-spacing:-.15px">Envoyer par mail</div>
<div class="t s13" style="left:1462px;top:850.9px;color:#fff">Enregistrer</div>
<div class="t s13" style="left:1580.3px;top:850.9px;color:#fff;letter-spacing:-.2px">Annuler</div>
<svg style="left:1297px;top:847px" width="23" height="20" viewBox="0 0 23 20"><rect x="1" y="2" width="17.2" height="12.2" fill="#7b3cc0"/><path d="M0.5 1.5 L18.7 14.7 M18.7 1.5 L0.5 14.7" stroke="#0066b5" stroke-width="1.3"/><path d="M11.2 12.4 H15.3 V9.6 L20.8 14 L15.3 18.4 V15.8 H11.2 Z" fill="#7b3cc0" stroke="#0066b5" stroke-width="2" paint-order="stroke"/></svg>
<svg style="left:1436px;top:844px" width="24" height="25" viewBox="0 0 24 25"><path d="M1 3 A2 2 0 0 1 3 1 H19 L23 5 V22 A2 2 0 0 1 21 24 H3 A2 2 0 0 1 1 22 Z" fill="#fff"/><rect x="6" y="1" width="11" height="6.5" fill="#0066b5"/><rect x="13.5" y="2" width="2.5" height="4.5" fill="#fff"/><rect x="4.5" y="11" width="15" height="11" fill="#0066b5"/><path d="M6.5 14 H17.5 M6.5 17 H17.5 M6.5 20 H17.5" stroke="#fff" stroke-width="1.3"/></svg>
<svg style="left:1561px;top:850px" width="14" height="14" viewBox="0 0 14 14"><circle cx="7" cy="7" r="6.8" fill="#fff"/><path d="M4.5 4.5 L9.5 9.5 M9.5 4.5 L4.5 9.5" stroke="#0066b5" stroke-width="1.9" stroke-linecap="round"/></svg>
</body></html>
